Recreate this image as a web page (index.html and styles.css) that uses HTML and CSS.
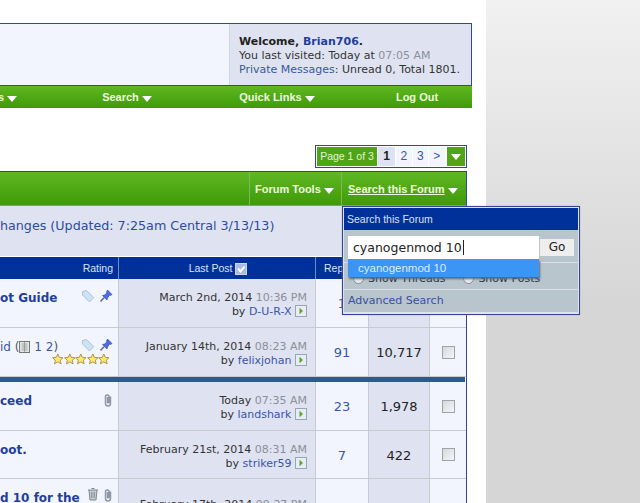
FILE: index.html
```html
<!DOCTYPE html>
<html lang="en">
<head>
<meta charset="utf-8">
<title>Forum</title>
<link rel="stylesheet" href="styles.css">
</head>
<body>
<svg class="defs" width="0" height="0" aria-hidden="true">
  <symbol id="i-tag" viewBox="0 0 14 14"><path d="M1.5 2.5 5.5 1.5 12.8 8.5 8.5 13 1.5 6Z" fill="#cfe2f4" stroke="#a9c4de"/><circle cx="4" cy="4" r="1" fill="#fff" stroke="#a9c4de" stroke-width=".5"/></symbol>
  <symbol id="i-pin" viewBox="0 0 14 14"><path d="M8.5 1 13 5.5 11.5 6.5 10.5 6 8.5 9 8 11 3.5 6.5 5.5 6 8 4 7.5 3Z" fill="#4a6ee0" stroke="#3550b0" stroke-width=".7"/><path d="M5 8.8 1.5 12.5" stroke="#5a6a90" stroke-width="1.5"/></symbol>
  <symbol id="i-star" viewBox="0 0 12 12"><path d="M6 .8 7.6 4.3 11.4 4.7 8.6 7.2 9.4 11 6 9 2.6 11 3.4 7.2.6 4.7 4.4 4.3Z" fill="#fbe676" stroke="#a58a3c" stroke-width=".9"/></symbol>
  <symbol id="i-clip" viewBox="0 0 10 16"><path d="M7.5 4.5V11.5A2.5 2.5 0 0 1 2.5 11.5V4A2 2 0 0 1 6 4V10.5A1 1 0 0 1 4.5 10.5V5" fill="none" stroke="#8f98a4" stroke-width="1.5"/></symbol>
  <symbol id="i-trash" viewBox="0 0 12 14"><path d="M1 3H11M2 3 3 13H9L10 3M4.5 1.5H7.5" fill="#c7ccd3" stroke="#7e8690"/><path d="M4.5 5V11M6 5V11M7.5 5V11" stroke="#7e8690" stroke-width=".7"/></symbol>
  <symbol id="i-go" viewBox="0 0 12 12"><rect x=".5" y=".5" width="11" height="11" fill="#e8ecf4" stroke="#9aa6b8"/><path d="M4.5 2.8 8 6 4.5 9.2Z" fill="#5aa62a"/></symbol>
  <symbol id="i-page" viewBox="0 0 11 12"><rect x=".5" y=".5" width="10" height="11" fill="#e4e6e8" stroke="#777"/><path d="M2.5 3H8.5M2.5 5H8.5M2.5 7H8.5M2.5 9H8.5M5.5 1V11" stroke="#888" stroke-width=".7"/></symbol>
  <symbol id="i-sort" viewBox="0 0 12 12"><rect x=".5" y=".5" width="11" height="11" fill="#a9bde2" stroke="#c9d6ee"/><path d="M3 5.5 5.5 8.5 9.5 3.5" fill="none" stroke="#fff" stroke-width="2"/></symbol>
</svg>

<div class="page">
  <main class="main">
    <section class="topbox">
      <div class="topbox-blank"></div>
      <div class="welcome">
        <div><b>Welcome, <a class="link-strong">Brian706</a>.</b></div>
        <div>You last visited: Today at <span class="time">07:05 AM</span></div>
        <div><a class="link">Private Messages</a>: Unread 0, Total 1801.</div>
      </div>
    </section>
    <nav class="topnav">
      <span class="nav-item nav-first">s <i class="caret"></i></span>
      <span class="nav-item">Search <i class="caret"></i></span>
      <span class="nav-item">Quick Links <i class="caret"></i></span>
      <span class="nav-item nav-last">Log Out</span>
    </nav>

    <div class="pager-wrap">
      <div class="pager">
        <span class="pg-label">Page 1 of 3</span>
        <span class="pg-cell pg-current">1</span>
        <span class="pg-cell">2</span>
        <span class="pg-cell">3</span>
        <span class="pg-cell">&gt;</span>
        <span class="pg-arrow"><i class="caret"></i></span>
      </div>
    </div>

    <section class="forum">
      <div class="forum-head">
        <span class="fh-fill"></span>
        <span class="fh-cell fh-tools">Forum Tools <i class="caret"></i></span>
        <span class="fh-cell fh-search"><u>Search this Forum</u> <i class="caret"></i></span>
      </div>
      <div class="announce">hanges (Updated: 7:25am Central 3/13/13)</div>
      <div class="cols row-grid">
        <span class="col-rating">Rating</span>
        <span class="col-last">Last Post <svg class="sort"><use href="#i-sort"/></svg></span>
        <span class="col-rep">Replies</span>
        <span></span>
        <span></span>
      </div>

      <div class="row row-grid">
        <div class="c-title"><a class="t">ot Guide</a><span class="t-icons"><svg class="ic"><use href="#i-tag"/></svg><svg class="ic"><use href="#i-pin"/></svg></span></div>
        <div class="c-last"><div>March 2nd, 2014 <span class="time">10:36 PM</span></div><div>by <a class="link">D-U-R-X</a> <svg class="go"><use href="#i-go"/></svg></div></div>
        <div class="c-rep">1</div>
        <div class="c-views"></div>
        <div class="c-check"><input class="check" type="checkbox"></div>
      </div>

      <div class="row row-grid">
        <div class="c-title"><span class="t-sub"><a class="t">id</a> (<svg class="pg-ic"><use href="#i-page"/></svg> <a class="link">1</a> <a class="link">2</a>)</span><span class="t-icons"><svg class="ic"><use href="#i-tag"/></svg><svg class="ic"><use href="#i-pin"/></svg></span><span class="stars"><svg class="st"><use href="#i-star"/></svg><svg class="st"><use href="#i-star"/></svg><svg class="st"><use href="#i-star"/></svg><svg class="st"><use href="#i-star"/></svg><svg class="st"><use href="#i-star"/></svg></span></div>
        <div class="c-last"><div>January 14th, 2014 <span class="time">08:23 AM</span></div><div>by <a class="link">felixjohan</a> <svg class="go"><use href="#i-go"/></svg></div></div>
        <div class="c-rep">91</div>
        <div class="c-views">10,717</div>
        <div class="c-check"><input class="check" type="checkbox"></div>
      </div>

      <div class="divider"></div>

      <div class="row row-grid">
        <div class="c-title"><a class="t">ceed</a><span class="t-icons"><svg class="clip"><use href="#i-clip"/></svg></span></div>
        <div class="c-last"><div>Today <span class="time">07:35 AM</span></div><div>by <a class="link">landshark</a> <svg class="go"><use href="#i-go"/></svg></div></div>
        <div class="c-rep">23</div>
        <div class="c-views">1,978</div>
        <div class="c-check"><input class="check" type="checkbox"></div>
      </div>

      <div class="row row-short row-grid">
        <div class="c-title"><a class="t">oot.</a></div>
        <div class="c-last"><div>February 21st, 2014 <span class="time">08:31 AM</span></div><div>by <a class="link">striker59</a> <svg class="go"><use href="#i-go"/></svg></div></div>
        <div class="c-rep">7</div>
        <div class="c-views">422</div>
        <div class="c-check"><input class="check" type="checkbox"></div>
      </div>

      <div class="row row-grid">
        <div class="c-title"><a class="t">d 10 for the</a><span class="t-icons t-icons-wide"><svg class="trash"><use href="#i-trash"/></svg><svg class="clip"><use href="#i-clip"/></svg></span></div>
        <div class="c-last c-last-low"><div>February 17th, 2014 <span class="time">09:27 PM</span></div></div>
        <div class="c-rep"></div>
        <div class="c-views"></div>
        <div class="c-check"></div>
      </div>
    </section>

    <div class="popup">
      <div class="pop-title">Search this Forum</div>
      <div class="pop-search">
        <div class="pop-input">cyanogenmod 10<span class="cursor"></span></div>
        <div class="pop-go">Go</div>
      </div>
      <div class="pop-radios">
        <span class="radio"></span><span>Show Threads</span>
        <span class="radio radio-second"></span><span>Show Posts</span>
      </div>
      <div class="pop-adv"><a class="adv">Advanced Search</a></div>
      <div class="suggest">cyanogenmod 10</div>
    </div>
  </main>
  <aside class="side"></aside>
</div>
</body>
</html>
```
FILE: styles.css
```css
* { box-sizing: border-box; }
html, body { margin: 0; padding: 0; }
body {
  width: 640px;
  height: 503px;
  overflow: hidden;
  background: #fff;
  font: 11px/14px "DejaVu Sans", Verdana, sans-serif;
  color: #333;
}
.defs { display: block; height: 0; }
a { text-decoration: none; }
.caret {
  display: inline-block;
  width: 0;
  height: 0;
  border-left: 5px solid transparent;
  border-right: 5px solid transparent;
  border-top: 6px solid #fff;
  vertical-align: -1px;
}
.page { display: flex; height: 503px; overflow: hidden; }
.main { position: relative; width: 486px; padding-top: 23px; background: #fff; flex: none; }
.side {
  flex: 1;
  background: linear-gradient(#f1f1f1 0, #d6d6d6 300px, #d6d6d6 100%);
}

/* top box */
.topbox {
  display: flex;
  width: 472px;
  height: 63px;
  border-top: 1px solid #33479a;
  border-bottom: 1px solid #33479a;
  border-right: 1px solid #33479a;
}
.topbox-blank { width: 230px; background: #f3f5fe; border-right: 1px solid #cfd3da; }
.welcome {
  flex: 1;
  background: #dfe3f1;
  padding: 11px 0 0 9px;
  color: #333;
  white-space: nowrap;
}
.welcome b { color: #222; }
.link-strong { color: #1f3f9c; }
.link { color: #3a55a8; }
.time { color: #8b8f98; }

.topnav {
  display: grid;
  grid-template-columns: 52px 150px 150px 120px;
  width: 472px;
  height: 22px;
  background: linear-gradient(#5fb822, #3f9a0a);
  font: bold 11px/22px "Liberation Sans", Arial, sans-serif;
  color: #eef8dc;
  text-align: center;
}
.nav-first { text-align: left; margin-left: -2px; }
.nav-last { padding-left: 10px; }

/* pager */
.pager-wrap { display: flex; justify-content: flex-end; width: 467px; margin-top: 37px; }
.pager {
  display: flex;
  width: 152px;
  height: 23px;
  border: 1px solid #33479a;
  padding: 1px;
  gap: 1px;
  background: #fff;
  font: 10.5px/19px "Liberation Sans", Arial, sans-serif;
}
.pg-label { width: 60px; background: #4fa516; color: #e4f4cf; text-align: center; }
.pg-cell { width: 15.5px; background: #f3f5fe; color: #3a55a8; text-align: center; font-size: 12px; }
.pg-current { width: 17px; background: #dfe3f1; color: #222; font-weight: bold; }
.pg-arrow { flex: 1; background: #4fa516; text-align: center; line-height: 16px; margin-left: 1px; }

/* forum */
.forum { width: 467px; margin-top: 3px; border-right: 1px solid #33479a; }
.forum-head {
  display: flex;
  height: 35px;
  border-top: 1px solid #33479a;
  border-bottom: 1px solid #7c97b5;
  background: linear-gradient(#5fb822, #3f9a0a);
  font: bold 11px/34px "Liberation Sans", Arial, sans-serif;
  color: #eef8dc;
}
.fh-fill { width: 249px; }
.fh-cell { border-left: 1px solid #7dbb52; white-space: nowrap; }
.fh-tools { width: 92px; padding-left: 5px; }
.fh-search { flex: 1; padding-left: 6px; }
.announce {
  height: 51px;
  padding-top: 12px;
  background: #dfe3f1;
  font-size: 12.7px;
  line-height: 16px;
  color: #2d4c9e;
  white-space: nowrap;
  border-bottom: 1px solid #fff;
}
.row-grid { display: grid; grid-template-columns: 119px 197px 53px 61px 36px; }
.cols {
  height: 22px;
  background: #00309a;
  font: 10.5px/22px "Liberation Sans", Arial, sans-serif;
  color: #d9e4f6;
}
.cols > span { white-space: nowrap; overflow: hidden; }
.col-rating { text-align: right; padding-right: 5px; border-right: 1px solid #6d8ec4; }
.col-last { text-align: center; border-right: 1px solid #6d8ec4; padding-left: 2px; }
.col-rep { padding-left: 8px; }
.sort { width: 12px; height: 12px; vertical-align: -3px; }
.row { height: 49px; }
.row-short { height: 48px; }
.row > div { border-bottom: 1px solid #c6cad1; border-right: 1px solid #c6cad1; }
.c-title {
  position: relative;
  display: flex;
  align-items: flex-start;
  padding: 11px 0 0 0;
  background: #f3f5fe;
  white-space: nowrap;
  overflow: hidden;
}
.t { font: bold 12px/16px "DejaVu Sans", Verdana, sans-serif; color: #1f3f9c; }
.t-sub { font-size: 12px; line-height: 16px; color: #555; }
.t-sub .t { font-weight: normal; font-size: 12px; color: #3a55a8; }
.t-sub .link { font-size: 12px; }
.pg-ic { width: 11px; height: 12px; vertical-align: -2px; }
.t-icons { position: absolute; right: 5px; top: 10px; display: flex; gap: 4px; }
.t-icons-wide { top: 8px; }
.ic { width: 14px; height: 14px; }
.clip { width: 10px; height: 16px; }
.trash { width: 12px; height: 14px; }
.stars { position: absolute; right: 8px; top: 25px; display: flex; }
.st { width: 11.6px; height: 12px; }
.c-last { background: #dfe3f1; text-align: right; padding: 12px 8px 0 0; white-space: nowrap; }
.c-last-low { padding-top: 19px; }
.go { width: 12px; height: 12px; vertical-align: -2px; }
.c-rep, .c-views {
  display: flex;
  align-items: center;
  justify-content: center;
  font-size: 13px;
  padding-top: 2px;
}
.c-rep { background: #f3f5fe; color: #3a55a8; }
.c-views { background: #dfe3f1; color: #222; }
.c-check { display: flex; align-items: center; justify-content: center; background: #f3f5fe; border-right: 0 !important; }
.check {
  appearance: none;
  width: 13px;
  height: 13px;
  margin: 0;
  border: 1px solid #a0a3a8;
  background: linear-gradient(135deg, #d6d8dc, #f5f6f8);
}
.divider { height: 5px; margin-right: 1px; background: #2d5a96; }

/* search popup (floats over the table) */
.popup {
  position: absolute;
  left: 342px;
  top: 206px;
  width: 238px;
  height: 109px;
  border: 1px solid #33479a;
  padding: 1px;
  background: #dfe3f1;
  box-shadow: 0 0 1px #8b93a8;
  z-index: 2;
}
.pop-title {
  height: 22px;
  background: #00309a;
  color: #d9e4f6;
  padding-left: 3px;
  font: 10.5px/22px "Liberation Sans", Arial, sans-serif;
}
.pop-search {
  display: flex;
  gap: 1px;
  height: 33px;
  padding: 6px 0 0 4px;
  background: #b9c5cd;
  border-bottom: 1px solid #d8dfe6;
}
.pop-input {
  width: 191px;
  height: 23px;
  padding-left: 5px;
  background: #fff;
  color: #222;
  font-size: 12.5px;
  line-height: 23px;
}
.cursor { display: inline-block; width: 1px; height: 15px; background: #222; vertical-align: -3px; margin-left: 1px; }
.pop-go {
  width: 34px;
  height: 17px;
  margin-top: 3px;
  background: #eeeeee;
  text-align: center;
  font-size: 12px;
  line-height: 17px;
  color: #222;
}
.pop-radios {
  display: flex;
  align-items: flex-start;
  height: 27px;
  padding: 9px 0 0 9px;
  gap: 4px;
  background: #b9c5cd;
  border-bottom: 1px solid #d8dfe6;
  white-space: nowrap;
  color: #2c3440;
}
.radio { width: 11px; height: 11px; margin-top: 1px; border-radius: 50%; border: 1px solid #8a8f96; background: #e8eaec; flex: none; }
.radio-second { margin-left: 14px; }
.pop-adv { height: 22px; padding-left: 4px; background: #b9c5cd; line-height: 21px; }
.adv { color: #3a4f9f; }
.suggest {
  position: absolute;
  left: 5px;
  top: 52px;
  width: 191px;
  height: 18px;
  padding-left: 10px;
  background: #3a95f5;
  color: #dcecff;
  box-shadow: 1px 2px 2px #5d6670;
  font: 11.5px/18px "Liberation Sans", Arial, sans-serif;
}
```
